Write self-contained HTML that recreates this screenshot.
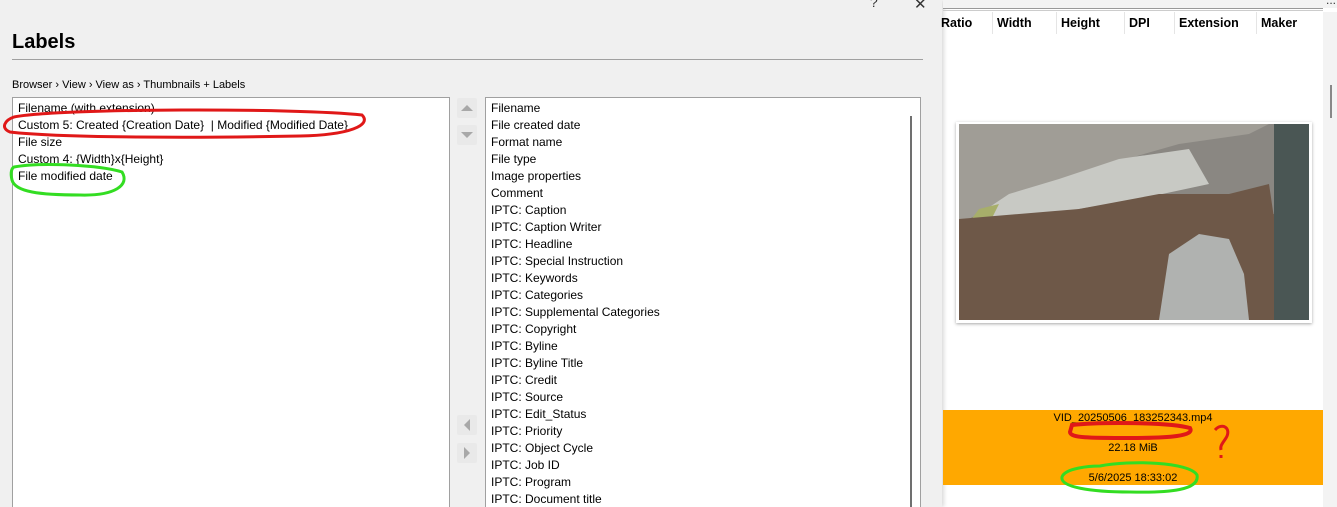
<!DOCTYPE html>
<html><head><meta charset="utf-8"><style>
*{margin:0;padding:0;box-sizing:border-box}
html,body{width:1337px;height:507px;overflow:hidden}
body{position:relative;background:#fff;font-family:"Liberation Sans",Tahoma,sans-serif;font-size:12px;color:#000}
.a{position:absolute}
.dlg{left:0;top:0;width:942px;height:507px;background:#f0f0f0;box-shadow:2px 0 4px rgba(0,0,0,.15);overflow:hidden}
.list{background:#fff;border:1px solid #a0a0a0;overflow:hidden}
.row{height:17px;line-height:17px;padding-left:5px;white-space:nowrap}
.btn{width:20px;height:20px;background:#e9e9e9;border-radius:2px}
.hdr{top:16px;font-weight:bold;font-size:12.5px}
.sep{top:12px;width:1px;height:22px;background:#e5e5e5}
</style></head><body>
<div class="a dlg">
  <div class="a" style="left:870px;top:-6px;font-size:14px;color:#333">?</div>
  <div class="a" style="left:914px;top:-5px;font-size:15px;color:#333">✕</div>
  <div class="a" style="left:12px;top:31px;font-size:20px;font-weight:bold">Labels</div>
  <div class="a" style="left:12px;top:59px;width:911px;height:1px;background:#a0a0a0"></div>
  <div class="a" style="left:12px;top:79px;font-size:11px;">Browser › View › View as › Thumbnails + Labels</div>
  <div class="a list" style="left:12px;top:97px;width:438px;height:415px;padding-top:2px">
    <div class="row">Filename (with extension)</div>
    <div class="row">Custom 5: Created {Creation Date}&nbsp; | Modified {Modified Date}</div>
    <div class="row">File size</div>
    <div class="row">Custom 4: {Width}x{Height}</div>
    <div class="row">File modified date</div>
  </div>
  <div class="a btn" style="left:457px;top:98px"><svg width="20" height="20"><path d="M4 13L10 7L16 13Z" fill="#a8a8a8"/></svg></div>
  <div class="a btn" style="left:457px;top:125px"><svg width="20" height="20"><path d="M4 7L10 13L16 7Z" fill="#a8a8a8"/></svg></div>
  <div class="a btn" style="left:457px;top:415px"><svg width="20" height="20"><path d="M13 4L7 10L13 16Z" fill="#a8a8a8"/></svg></div>
  <div class="a btn" style="left:457px;top:443px"><svg width="20" height="20"><path d="M7 4L13 10L7 16Z" fill="#a8a8a8"/></svg></div>
  <div class="a list" style="left:485px;top:97px;width:436px;height:415px;padding-top:2px">
    <div class="row">Filename</div><div class="row">File created date</div><div class="row">Format name</div><div class="row">File type</div><div class="row">Image properties</div><div class="row">Comment</div><div class="row">IPTC: Caption</div><div class="row">IPTC: Caption Writer</div><div class="row">IPTC: Headline</div><div class="row">IPTC: Special Instruction</div><div class="row">IPTC: Keywords</div><div class="row">IPTC: Categories</div><div class="row">IPTC: Supplemental Categories</div><div class="row">IPTC: Copyright</div><div class="row">IPTC: Byline</div><div class="row">IPTC: Byline Title</div><div class="row">IPTC: Credit</div><div class="row">IPTC: Source</div><div class="row">IPTC: Edit_Status</div><div class="row">IPTC: Priority</div><div class="row">IPTC: Object Cycle</div><div class="row">IPTC: Job ID</div><div class="row">IPTC: Program</div><div class="row">IPTC: Document title</div>
    <div class="a" style="left:424px;top:18px;width:2px;height:400px;background:#707070"></div>
  </div>
</div>
<div class="a" style="left:943px;top:0;width:394px;height:8px;background:#f3f3f3"></div>
<div class="a" style="left:943px;top:8px;width:380px;height:3px;border-top:1px solid #999;border-bottom:1px solid #ccc"></div>
<div class="a" style="left:1326px;top:-7px;font-size:12px;color:#333">...</div>
<div class="a hdr" style="left:941px">Ratio</div>
<div class="a sep" style="left:992px"></div>
<div class="a hdr" style="left:997px">Width</div>
<div class="a sep" style="left:1056px"></div>
<div class="a hdr" style="left:1061px">Height</div>
<div class="a sep" style="left:1124px"></div>
<div class="a hdr" style="left:1129px">DPI</div>
<div class="a sep" style="left:1174px"></div>
<div class="a hdr" style="left:1179px">Extension</div>
<div class="a sep" style="left:1256px"></div>
<div class="a hdr" style="left:1261px">Maker</div>
<div class="a" style="left:1323px;top:12px;width:14px;height:495px;background:#f3f3f3"></div>
<div class="a" style="left:1330px;top:85px;width:2px;height:33px;background:#888"></div>
<div class="a" style="left:956px;top:122px;width:356px;height:201px;background:#fff;box-shadow:0 1px 3px rgba(0,0,0,.35)"></div>
<svg class="a" style="left:959px;top:124px" width="350" height="196">
  <defs><linearGradient id="g" x1="0" y1="0" x2="1" y2="1"><stop offset="0" stop-color="#7d756a"/><stop offset="1" stop-color="#6a5545"/></linearGradient></defs>
  <rect width="350" height="196" fill="url(#g)"/>
  <rect width="350" height="90" fill="#8a8782"/>
  <path d="M0 100 L40 80 L90 60 L150 40 L220 20 L290 10 L310 0 L0 0Z" fill="#a09d96"/>
  <path d="M5 100 L50 70 L100 55 L160 35 L230 25 L250 60 L180 75 L120 85 L60 100Z" fill="#c8c9c4"/>
  <path d="M5 105 L20 85 L40 80 L30 100Z" fill="#a7ae6a"/>
  <path d="M0 95 L120 85 L200 70 L270 70 L310 60 L330 196 L0 196Z" fill="#6e5848"/>
  <path d="M200 196 L210 130 L240 110 L270 115 L285 150 L290 196Z" fill="#b0b2b0"/>
  <rect x="315" y="0" width="35" height="196" fill="#4a5654"/>
</svg>
<div class="a" style="left:943px;top:410px;width:380px;height:75px;background:#ffa800;text-align:center;font-size:11px;line-height:17px">
  <div>VID_20250506_183252343.mp4</div>
  <div style="margin-top:13px">22.18 MiB</div>
  <div style="margin-top:13px">5/6/2025 18:33:02</div>
</div>
<svg class="a" style="left:0;top:0" width="1337" height="507">
  <path d="M14 117 C60 108 300 108 362 115 C372 125 350 135 300 136 C200 138 60 138 10 132 C0 128 5 120 14 117Z" fill="none" stroke="#e01818" stroke-width="3"/>
  <path d="M14 167 C40 162 100 165 122 172 C130 185 115 196 80 195 C40 195 15 192 12 180 C10 172 12 168 14 167Z" fill="none" stroke="#33dd22" stroke-width="3"/>
  <path d="M1072 425 C1100 422 1170 422 1190 428 C1195 436 1170 438 1130 438 C1090 438 1070 438 1070 432Z" fill="none" stroke="#e01818" stroke-width="4"/>
  <path d="M1215 430 C1222 422 1232 428 1226 438 C1222 444 1220 446 1221 450 M1221 455 L1221 458" fill="none" stroke="#e01818" stroke-width="3"/>
  <path d="M1100 466 C1130 460 1190 462 1197 475 C1200 490 1170 493 1130 492 C1090 492 1060 487 1062 477 C1065 468 1090 466 1100 466Z" fill="none" stroke="#33dd22" stroke-width="3"/>
</svg>
</body></html>
